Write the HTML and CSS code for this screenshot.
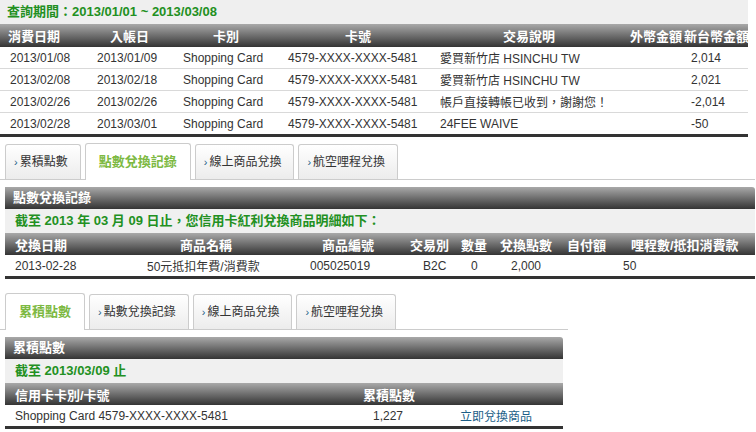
FILE: index.html
```html
<!DOCTYPE html>
<html lang="zh-Hant">
<head>
    <meta charset="UTF-8">
    <meta name="viewport" content="width=device-width, initial-scale=1.0">
    <title>紅利點數查詢</title>
    <link rel="stylesheet" href="styles.css">
</head>
<body>
    <div class="page">
        <div class="period">查詢期間：2013/01/01 ~ 2013/03/08</div>
        <table class="grid txn">
            <colgroup>
                <col style="width:92px"><col style="width:86px"><col style="width:105px"><col style="width:152px">
                <col style="width:194px"><col style="width:55px"><col style="width:64px">
            </colgroup>
            <thead>
                <tr>
                    <th>消費日期</th>
                    <th>入帳日</th>
                    <th>卡別</th>
                    <th>卡號</th>
                    <th>交易說明</th>
                    <th>外幣金額</th>
                    <th>新台幣金額</th>
                </tr>
            </thead>
            <tbody>
                <tr><td>2013/01/08</td><td>2013/01/09</td><td>Shopping Card</td><td>4579-XXXX-XXXX-5481</td><td>愛買新竹店 HSINCHU TW</td><td></td><td>2,014</td></tr>
                <tr><td>2013/02/08</td><td>2013/02/18</td><td>Shopping Card</td><td>4579-XXXX-XXXX-5481</td><td>愛買新竹店 HSINCHU TW</td><td></td><td>2,021</td></tr>
                <tr><td>2013/02/26</td><td>2013/02/26</td><td>Shopping Card</td><td>4579-XXXX-XXXX-5481</td><td>帳戶直接轉帳已收到，謝謝您！</td><td></td><td>-2,014</td></tr>
                <tr><td>2013/02/28</td><td>2013/03/01</td><td>Shopping Card</td><td>4579-XXXX-XXXX-5481</td><td>24FEE WAIVE</td><td></td><td>-50</td></tr>
            </tbody>
        </table>

        <div class="tabs wide">
            <div class="tab"><span class="arrow">›</span>累積點數</div>
            <div class="tab active">點數兌換記錄</div>
            <div class="tab"><span class="arrow">›</span>線上商品兌換</div>
            <div class="tab"><span class="arrow">›</span>航空哩程兌換</div>
        </div>
        <div class="section wide">
            <div class="section-title">點數兌換記錄</div>
            <div class="section-note">截至 2013 年 03 月 09 日止，您信用卡紅利兌換商品明細如下：</div>
            <table class="grid redeem">
                <colgroup>
                    <col style="width:135px"><col style="width:160px"><col style="width:100px"><col style="width:55px">
                    <col style="width:40px"><col style="width:65px"><col style="width:55px"><col style="width:140px">
                </colgroup>
                <thead>
                    <tr>
                        <th>兌換日期</th>
                        <th>商品名稱</th>
                        <th>商品編號</th>
                        <th>交易別</th>
                        <th>數量</th>
                        <th>兌換點數</th>
                        <th>自付額</th>
                        <th>哩程數/抵扣消費款</th>
                    </tr>
                </thead>
                <tbody>
                    <tr><td>2013-02-28</td><td>50元抵扣年費/消費款</td><td>005025019</td><td>B2C</td><td>0</td><td>2,000</td><td></td><td>50</td></tr>
                </tbody>
            </table>
        </div>

        <div class="tabs narrow">
            <div class="tab active">累積點數</div>
            <div class="tab"><span class="arrow">›</span>點數兌換記錄</div>
            <div class="tab"><span class="arrow">›</span>線上商品兌換</div>
            <div class="tab"><span class="arrow">›</span>航空哩程兌換</div>
        </div>
        <div class="section narrow">
            <div class="section-title">累積點數</div>
            <div class="section-note">截至 2013/03/09 止</div>
            <table class="grid points">
                <colgroup>
                    <col style="width:350px"><col style="width:95px"><col style="width:113px">
                </colgroup>
                <thead>
                    <tr>
                        <th>信用卡卡別/卡號</th>
                        <th>累積點數</th>
                        <th></th>
                    </tr>
                </thead>
                <tbody>
                    <tr><td>Shopping Card 4579-XXXX-XXXX-5481</td><td>1,227</td><td><a href="#" class="link">立即兌換商品</a></td></tr>
                </tbody>
            </table>
        </div>
    </div>
</body>
</html>
```

FILE: styles.css
```css
body {
    margin: 0;
    font-family: "Liberation Sans", Arial, "Noto Sans CJK TC", sans-serif;
    font-size: 12px;
    color: #333;
    background: #fff;
}
.page { width: 756px; }

.period {
    width: 748px;
    height: 24px;
    line-height: 24px;
    padding-left: 7px;
    box-sizing: border-box;
    background: #efefef;
    color: #229022;
    font-size: 13px;
    font-weight: bold;
}

/* shared table look */
.grid {
    border-collapse: separate;
    border-spacing: 0;
    table-layout: fixed;
}
.grid th {
    height: 22px;
    padding: 0;
    text-align: left;
    color: #fff;
    font-size: 13px;
    font-weight: bold;
    white-space: nowrap;
    background: linear-gradient(#a9a9a9, #343434);
}
.grid td {
    height: 21px;
    padding: 0;
    text-align: left;
    white-space: nowrap;
    border-bottom: 1px solid #d9d9d9;
}
.grid tbody tr:last-child td { border-bottom: 3px solid #333; }

/* transactions */
.txn { width: 748px; }
.txn th { height: 23px; }
.txn td { padding-left: 5px; }
.txn td:first-child { padding-left: 10px; }
.txn th:nth-child(1) { padding-left: 8px; }
.txn th:nth-child(2) { padding-left: 18px; }
.txn th:nth-child(3) { padding-left: 35px; }
.txn th:nth-child(4) { padding-left: 62px; }
.txn th:nth-child(5) { padding-left: 68px; }
.txn th:nth-child(6) { padding-left: 1px; }
.txn td:nth-child(7) { padding-left: 7px; }

/* tabs */
.tabs {
    display: flex;
    align-items: flex-end;
    gap: 4px;
    padding-left: 5px;
    border-bottom: 1px solid #ccc;
}
.tabs.wide { width: 750px; margin-top: 6px; }
.tabs.narrow { width: 563px; margin-top: 14px; }
.tab {
    height: 34px;
    line-height: 34px;
    padding: 0 12px 0 8px;
    border: 1px solid #ccc;
    border-bottom: none;
    border-radius: 3px 3px 0 0;
    background: linear-gradient(#fff, #ececec);
    white-space: nowrap;
}
.tab.active {
    height: 36px;
    line-height: 36px;
    margin-bottom: -1px;
    padding: 0 13px;
    background: #fff;
    color: #7db942;
    font-size: 13px;
    font-weight: bold;
}
.arrow {
    color: #1b5e87;
    font-size: 11px;
    margin-right: 2px;
}

/* sections */
.section { margin: 7px 0 0 5px; }
.section.wide { width: 750px; }
.section.narrow { width: 558px; }
.section-title {
    height: 22px;
    line-height: 22px;
    padding-left: 8px;
    color: #fff;
    font-size: 13px;
    font-weight: bold;
    border-radius: 0 3px 0 0;
    background: linear-gradient(#a9a9a9, #343434);
}
.section-note {
    height: 24px;
    line-height: 24px;
    padding-left: 10px;
    background: #f0f0f0;
    color: #229022;
    font-size: 13px;
    font-weight: bold;
}

/* redeem records */
.redeem { width: 750px; }
.redeem th:nth-child(1), .redeem td:nth-child(1) { padding-left: 10px; }
.redeem th:nth-child(2) { padding-left: 40px; }
.redeem td:nth-child(2) { padding-left: 7px; }
.redeem th:nth-child(3) { padding-left: 22px; }
.redeem td:nth-child(3) { padding-left: 10px; }
.redeem th:nth-child(4) { padding-left: 10px; }
.redeem td:nth-child(4) { padding-left: 23px; }
.redeem th:nth-child(5) { padding-left: 6px; }
.redeem td:nth-child(5) { padding-left: 16px; }
.redeem th:nth-child(6) { padding-left: 5px; }
.redeem td:nth-child(6) { padding-left: 16px; }
.redeem th:nth-child(7) { padding-left: 7px; }
.redeem th:nth-child(8) { padding-left: 16px; }
.redeem td:nth-child(8) { padding-left: 8px; }

/* points */
.points { width: 558px; }
.points th:nth-child(1), .points td:nth-child(1) { padding-left: 10px; }
.points th:nth-child(2) { padding-left: 8px; }
.points td:nth-child(2) { padding-left: 18px; }
.points td:nth-child(3) { padding-left: 10px; }
.link { color: #1b5e87; text-decoration: none; }
```
